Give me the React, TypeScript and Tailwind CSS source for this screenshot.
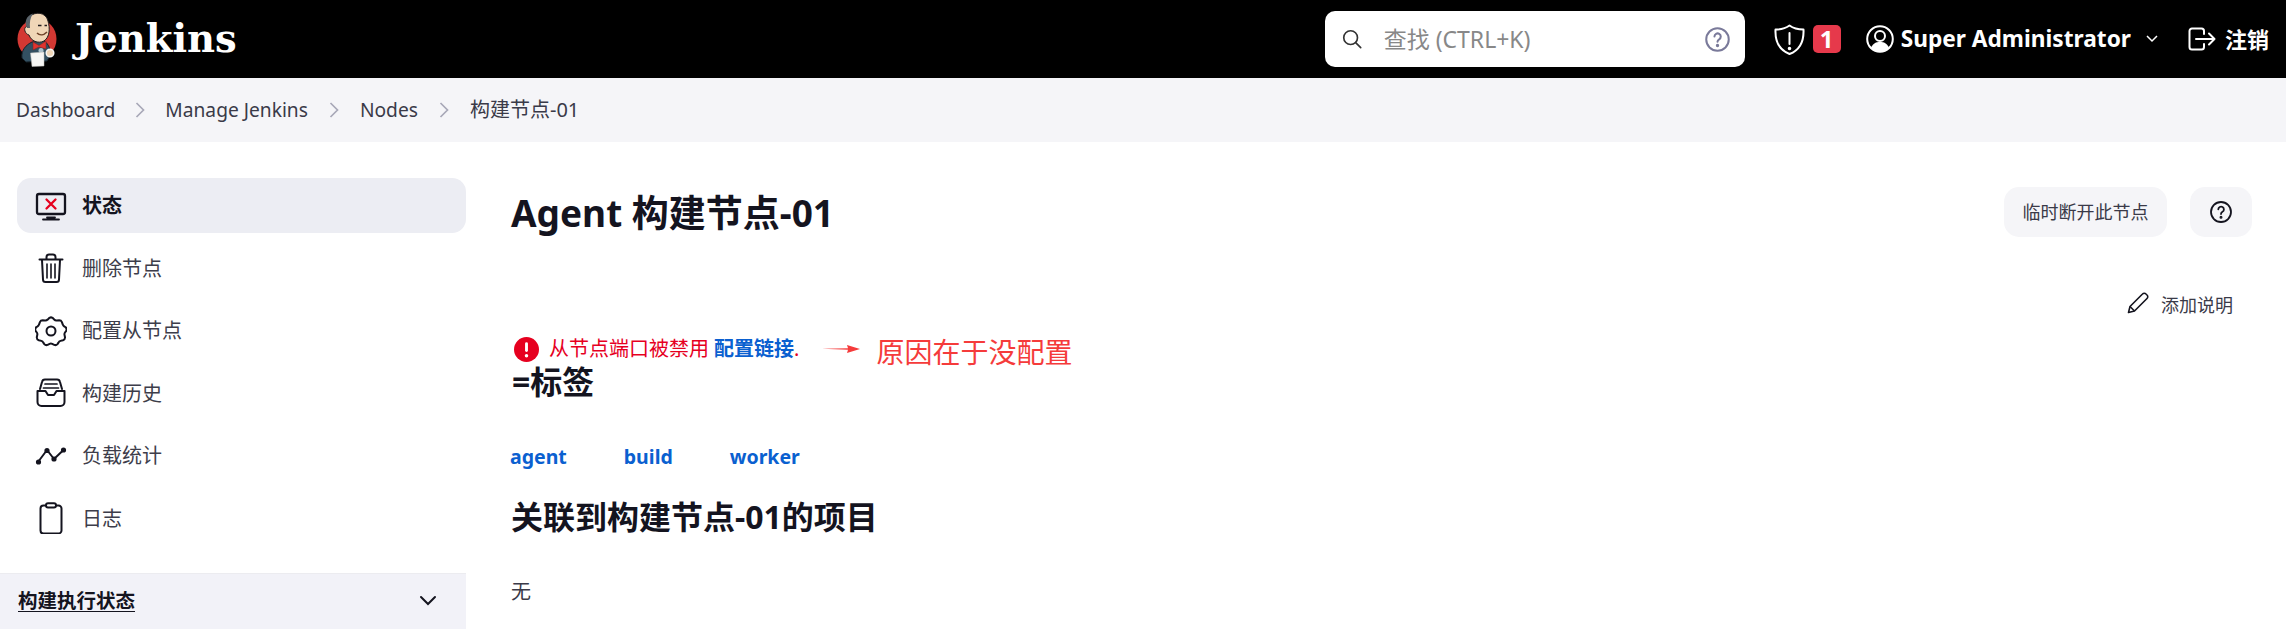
import React from "react";

const SANS = "font-['Noto_Sans','Noto_Sans_CJK_SC',sans-serif]";

function Logo() {
  return (
    <svg width="40" height="55" viewBox="0 0 40 55" className="shrink-0">
      <ellipse cx="20" cy="27" rx="19.500" ry="20" fill="#d33833" />
      <path d="M5 46 C4 38 9 33 15 30 L27 29 C32 32 34 38 33 44 L30 49 L9 50 Z" fill="#335061" stroke="#16232b" strokeWidth="1" />
      <path d="M12 5 C18 -1 29 0 31 9 C33 16 33 25 27 29 C21 32 14 29 12 23 C8 22 6 16 9.500 14.500 C9.500 10.500 10 7.500 12 5 Z" fill="#f0d6b7" stroke="#231f20" strokeWidth="1" />
      <path d="M10 16 C7 10 9 4 16 1.500 C13 6 12.500 11 13 16 Z" fill="#5b646b" />
      <path d="M20 21 C23 24 27 23 30 20" stroke="#6d4128" strokeWidth="1.500" fill="none" />
      <path d="M21 13.500h3.500M27.500 13.500h2.500" stroke="#231f20" strokeWidth="1.500" />
      <path d="M16 30 L22 33.500 L29 29 L29 37 L22 35 L16 38 Z" fill="#e0342f" stroke="#81201d" strokeWidth=".5" />
      <circle cx="24" cy="38.500" r="2.500" fill="#a9bfca" />
      <path d="M13.500 41 L27 40 L27 54 L15 54.500 Z" fill="#f6f6f4" stroke="#bdbdb9" strokeWidth=".5" />
      <circle cx="33" cy="41" r="3.800" fill="#f0d6b7" stroke="#f6f6f4" strokeWidth="1.500" />
    </svg>
  );
}

const Ico = ({ children, size = 32, vb = 32 }: { children: React.ReactNode; size?: number; vb?: number }) => (
  <svg width={size} height={size} viewBox={`0 0 ${vb} ${vb}`} fill="none" stroke="currentColor" strokeWidth="2" strokeLinecap="round" strokeLinejoin="round" className="shrink-0">
    {children}
  </svg>
);

const Chevron = () => (
  <svg width="10" height="16" viewBox="0 0 10 16" fill="none" stroke="#a8a8b8" strokeWidth="1.700" className="shrink-0">
    <path d="M1.500 1l7 7-7 7" />
  </svg>
);

const Help = ({ size, color }: { size: number; color: string }) => (
  <svg width={size} height={size} viewBox="0 0 24 24" fill="none" stroke={color} strokeWidth="1.800" strokeLinecap="round" className="shrink-0">
    <circle cx="12" cy="12" r="10" />
    <path d="M9.300 9.300a2.800 2.800 0 1 1 4.200 2.500c-.9.500-1.500 1.100-1.500 2.200" />
    <circle cx="12" cy="17.300" r=".6" fill={color} />
  </svg>
);

const items: { label: string; active?: boolean; icon: React.ReactNode }[] = [
  {
    label: "状态",
    active: true,
    icon: (
      <Ico>
        <rect x="2" y="4" width="28" height="20" rx="2" strokeWidth="2.300" />
        <path d="M12 27.500h8M8 29.500h16" strokeWidth="1.800" />
        <path d="M11.500 9.500l9 9M20.500 9.500l-9 9" stroke="#e6001f" strokeWidth="2.300" />
      </Ico>
    ),
  },
  {
    label: "删除节点",
    icon: (
      <Ico>
        <path d="M4.500 7.500h23M11.500 7V5a2.500 2.500 0 0 1 2.500-2.500h4A2.500 2.500 0 0 1 20.500 5v2" />
        <path d="M7 8l1 19.500A2.500 2.500 0 0 0 10.500 30h11a2.500 2.500 0 0 0 2.500-2.500L25 8" />
        <path d="M12 12v14M16 12v14M20 12v14" strokeWidth="1.600" />
      </Ico>
    ),
  },
  {
    label: "配置从节点",
    icon: (
      <Ico>
        <path d="M12.800 4.500 L14.500 2.800 a3 3 0 0 1 3 0 L19.200 4.500 a3 3 0 0 0 2.600 1 l2.400-.2 a3 3 0 0 1 2.700 1.800 l.9 2.500 a3 3 0 0 0 1.600 1.900 l1 .6 a3 3 0 0 1 .6 4 l-1 1.400 a3 3 0 0 0 -.4 2.700 l.4 2 a3 3 0 0 1 -2 3 l-2.500.7 a3 3 0 0 0 -2 1.700 l-1 1.500 a3 3 0 0 1 -3.300.8 l-2-1 a3 3 0 0 0 -2.600 0 l-2 1 a3 3 0 0 1 -3.300-.8 l-1-1.500 a3 3 0 0 0 -2-1.700 l-2.500-.7 a3 3 0 0 1 -2-3 l.4-2 a3 3 0 0 0 -.4-2.700 l-1-1.400 a3 3 0 0 1 .6-4 l1-.6 a3 3 0 0 0 1.600-1.900 l.9-2.500 a3 3 0 0 1 2.700-1.800 l2.400.2 a3 3 0 0 0 2.600-1 Z" />
        <circle cx="16" cy="16" r="4.500" />
      </Ico>
    ),
  },
  {
    label: "构建历史",
    icon: (
      <Ico>
        <path d="M5 12l2-7a3 3 0 0 1 3-2.500h12a3 3 0 0 1 3 2.500l2 7" />
        <path d="M2.500 14h8l2.500 4h6l2.500-4h8v11a4 4 0 0 1-4 4H6.500a4 4 0 0 1-4-4Z" />
        <path d="M10 7h12M8.500 11h15" strokeWidth="1.700" />
      </Ico>
    ),
  },
  {
    label: "负载统计",
    icon: (
      <Ico>
        <path d="M3 22l9-12 7 9 10-9.500" />
        <circle cx="3.500" cy="22" r="1.600" fill="currentColor" />
        <circle cx="12" cy="10.500" r="1.600" fill="currentColor" />
        <circle cx="19" cy="19" r="1.600" fill="currentColor" />
        <circle cx="28.500" cy="10" r="1.600" fill="currentColor" />
      </Ico>
    ),
  },
  {
    label: "日志",
    icon: (
      <Ico>
        <path d="M11 3.500H8.500A3 3 0 0 0 5.500 6.500v22a3 3 0 0 0 3 3h15a3 3 0 0 0 3-3v-22a3 3 0 0 0-3-3H21" />
        <rect x="11" y="1.200" width="10" height="4.300" rx="2" />
      </Ico>
    ),
  },
];

export default function App() {
  return (
    <div className={`w-[2286px] h-[640px] overflow-hidden bg-white text-[#14141f] ${SANS}`}>
      <header className="h-[78px] bg-black flex items-center pl-[17px] pr-[17px] text-white">
        <Logo />
        <span className="ml-[18px] font-['DejaVu_Serif',serif] font-bold text-[38.500px] leading-none">Jenkins</span>
        <div className="ml-auto w-[420px] h-[56px] bg-white rounded-[10px] flex items-center pl-[16px] pr-[14px]">
          <svg width="22" height="22" viewBox="0 0 24 24" fill="none" stroke="#333" strokeWidth="1.800" strokeLinecap="round" className="shrink-0">
            <circle cx="10.500" cy="10.500" r="7.500" />
            <path d="M16 16l5.500 5.500" />
          </svg>
          <span className="ml-[21px] text-[23px] flex-1 text-[#888888]">查找 (CTRL+K)</span>
          <Help size={27} color="#7a7a9a" />
        </div>
        <div className="ml-[29px] flex items-center">
          <svg width="31" height="31" viewBox="0 0 31 31" fill="none" stroke="white" strokeWidth="2" strokeLinecap="round" strokeLinejoin="round">
            <path d="M15.500 1.500 C19.500 4.500 24.500 5.500 29.500 5.500 C30 17 26 26 15.500 30 C5 26 1 17 1.500 5.500 C6.500 5.500 11.500 4.500 15.500 1.500 Z" />
            <path d="M15.500 9v11" />
            <circle cx="15.500" cy="24.500" r=".8" fill="white" />
          </svg>
          <span className="ml-[8px] w-[28px] h-[28px] bg-[#e6394b] rounded-[5px] flex items-center justify-center font-bold text-[24px] text-white">1</span>
        </div>
        <div className="ml-[25px] flex items-center">
          <svg width="28" height="28" viewBox="0 0 28 28" fill="none" className="shrink-0">
            <circle cx="14" cy="14" r="12.800" stroke="white" strokeWidth="2" />
            <circle cx="14" cy="11" r="5" stroke="white" strokeWidth="2" />
            <path d="M5 23c2-5 5-6 9-6s7 1 9 6c-5 5-13 5-18 0Z" fill="white" />
          </svg>
          <span className="ml-[7px] font-bold text-[22.700px]">Super Administrator</span>
          <svg width="14" height="10" viewBox="0 0 14 10" fill="none" stroke="white" strokeWidth="1.500" className="ml-[14px]">
            <path d="M2 2l5 5 5-5" />
          </svg>
        </div>
        <div className="ml-[29px] flex items-center">
          <svg width="28" height="24" viewBox="0 0 28 24" fill="none" stroke="white" strokeWidth="2" strokeLinecap="round" strokeLinejoin="round">
            <path d="M16 7V4a2.500 2.500 0 0 0-2.500-2.500H4A2.500 2.500 0 0 0 1.500 4v16A2.500 2.500 0 0 0 4 22.500h9.500A2.500 2.500 0 0 0 16 20v-3" />
            <path d="M8 12h18.500M21 6.500l5.500 5.500-5.500 5.500" />
          </svg>
          <span className="ml-[9px] font-bold text-[22px]">注销</span>
        </div>
      </header>

      <nav className="h-[64px] bg-[#f5f5f8] flex items-center pl-[16px] text-[19.200px] text-[#3a3a48]">
        <span>Dashboard</span>
        <span className="mx-[20px]"><Chevron /></span>
        <span>Manage Jenkins</span>
        <span className="mx-[21px]"><Chevron /></span>
        <span>Nodes</span>
        <span className="mx-[21px]"><Chevron /></span>
        <span className="text-[20px]">构建节点-01</span>
      </nav>

      <div className="flex">
        <aside className="w-[466px] shrink-0 pt-[36px]">
          <ul className="pl-[17px] flex flex-col">
            {items.map((it) => (
              <li
                key={it.label}
                className={`h-[55px] mb-[7.500px] flex items-center pl-[18px] rounded-[14px] text-[20px] ${
                  it.active ? "bg-[#ecedf3] font-bold text-[#14141f]" : "text-[#3d3d4a]"
                }`}
              >
                <span className="text-[#14141f] flex">{it.icon}</span>
                <span className="ml-[15px] pt-[1px]">{it.label}</span>
              </li>
            ))}
          </ul>
          <div className="mt-[20px] h-[56px] border-t border-[#ececf0] bg-[#f2f2f8] flex items-center justify-between pl-[18px] pr-[28px] pb-[2px]">
            <span className="font-bold text-[19.500px] underline underline-offset-[3px]">构建执行状态</span>
            <svg width="20" height="12" viewBox="0 0 20 12" fill="none" stroke="#14141f" strokeWidth="2" strokeLinecap="round">
              <path d="M3 2l7 7 7-7" />
            </svg>
          </div>
        </aside>

        <main className="flex-1 pl-[45px] pr-[34px] pt-[45px]">
          <div className="flex items-center justify-between h-[50px]">
            <h1 className="font-bold text-[37px] leading-none">Agent 构建节点-01</h1>
            <div className="flex items-center gap-[23px]">
              <button className="h-[50px] w-[163px] bg-[#f5f5f8] rounded-[15px] text-[18px] text-[#3a3a48]">临时断开此节点</button>
              <button className="h-[50px] w-[62px] bg-[#f5f5f8] rounded-[15px] flex items-center justify-center">
                <Help size={24} color="#14141f" />
              </button>
            </div>
          </div>
          <div className="mt-[55px] flex justify-end items-center pr-[19px] h-[26px] text-[18px] text-[#3a3a48]">
            <svg width="22" height="22" viewBox="0 0 22 22" fill="none" stroke="#14141f" strokeWidth="1.600" strokeLinejoin="round" className="mr-[12px] -mt-[5px]">
              <path d="M1.500 20.500l1.500-6L15.500 2a2.400 2.400 0 0 1 3.500 0l1 1a2.400 2.400 0 0 1 0 3.500L7.500 19Z" />
              <path d="M3 14.500l4.500 4.500" />
            </svg>
            <span>添加说明</span>
          </div>
          <div className="mt-[16px] flex items-center h-[30px] text-[20px] text-[#e6001f]">
            <svg width="25" height="25" viewBox="0 0 26 26" className="ml-[3px] shrink-0">
              <circle cx="13" cy="13" r="13" fill="#e6001f" />
              <rect x="11.500" y="5.500" width="3" height="10" rx="1.500" fill="white" />
              <circle cx="13" cy="19.500" r="1.800" fill="white" />
            </svg>
            <span className="ml-[10px]">从节点端口被禁用</span>
            <span className="ml-[5px] font-bold text-[#0a60d0]">配置链接</span>
            <span>.</span>
            <svg width="38" height="8" viewBox="0 0 38 8" className="ml-[23px] shrink-0">
              <path d="M0 3.800 L26 3.200 L25 0 L38 4 L25 8 L26 4.800 Z" fill="#f53b3b" />
            </svg>
            <span className="ml-[16px] mt-[5px] text-[28px] text-[#f53b3b]">原因在于没配置</span>
          </div>
          <h2 className="-mt-[2px] ml-[1px] font-bold text-[32px] leading-[40px]">=标签</h2>
          <div className="mt-[40px] -ml-[1px] flex gap-[57px] font-bold text-[19.500px] text-[#0a60d0] leading-[30px]">
            <span>agent</span>
            <span>build</span>
            <span>worker</span>
          </div>
          <h2 className="mt-[25px] font-bold text-[32px] leading-[40px]">关联到构建节点-01的项目</h2>
          <p className="mt-[40px] text-[20px] text-[#3a3a48] leading-[30px]">无</p>
        </main>
      </div>
    </div>
  );
}
